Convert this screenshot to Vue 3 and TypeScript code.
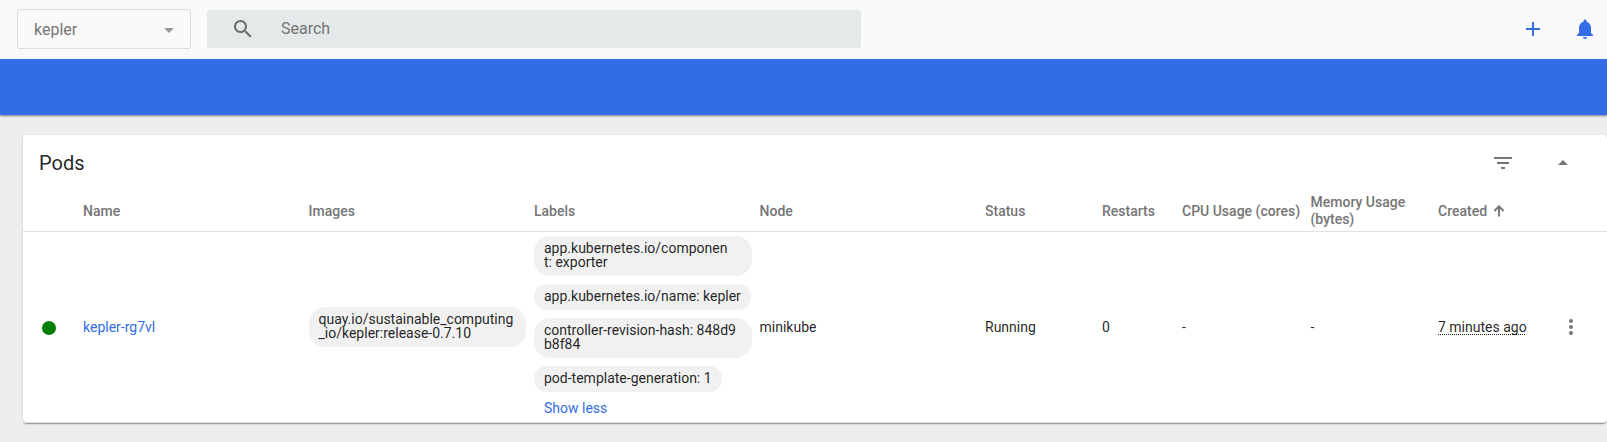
<script setup lang="ts">
interface Column {
  key: string
  title: string
  sorted?: boolean
}

const columns: Column[] = [
  { key: 'name', title: 'Name' },
  { key: 'images', title: 'Images' },
  { key: 'labels', title: 'Labels' },
  { key: 'node', title: 'Node' },
  { key: 'status', title: 'Status' },
  { key: 'restarts', title: 'Restarts' },
  { key: 'cpu', title: 'CPU Usage (cores)' },
  { key: 'memory', title: 'Memory Usage (bytes)' },
  { key: 'created', title: 'Created', sorted: true },
]

const pod = {
  name: 'kepler-rg7vl',
  images: ['quay.io/sustainable_computing_io/kepler:release-0.7.10'],
  labels: [
    'app.kubernetes.io/component:\u00a0exporter',
    'app.kubernetes.io/name:\u00a0kepler',
    'controller-revision-hash:\u00a0848d9b8f84',
    'pod-template-generation:\u00a01',
  ],
  node: 'minikube',
  status: 'Running',
  restarts: 0,
  cpu: '-',
  memory: '-',
  created: '7 minutes ago',
}
</script>

<template>
  <div class="page">
    <header class="topbar">
      <div class="namespace">
        <span>kepler</span>
        <i class="caret"></i>
      </div>
      <div class="search">
        <svg class="icon" viewBox="0 0 24 24">
          <path d="M15.5 14h-.79l-.28-.27C15.41 12.59 16 11.11 16 9.5 16 5.91 13.09 3 9.5 3S3 5.91 3 9.5 5.91 16 9.5 16c1.61 0 3.09-.59 4.23-1.57l.27.28v.79l5 4.99L20.49 19l-4.99-5zm-6 0C7.01 14 5 11.99 5 9.5S7.01 5 9.5 5 14 7.01 14 9.5 11.99 14 9.5 14z" />
        </svg>
        <span>Search</span>
      </div>
      <div class="actions">
        <svg class="icon" viewBox="0 0 24 24"><path d="M19 13h-6v6h-2v-6H5v-2h6V5h2v6h6v2z" /></svg>
        <svg class="icon" viewBox="0 0 24 24">
          <path d="M12 22c1.1 0 2-.9 2-2h-4c0 1.1.89 2 2 2zm6-6v-5c0-3.07-1.64-5.64-4.5-6.32V4c0-.83-.67-1.5-1.5-1.5s-1.5.67-1.5 1.5v.68C7.63 5.36 6 7.92 6 11v5l-2 2v1h16v-1l-2-2z" />
        </svg>
      </div>
    </header>
    <div class="banner"></div>
    <main class="content">
      <section class="card">
        <div class="card-head">
          <h1>Pods</h1>
          <div class="tools">
            <svg class="icon" viewBox="0 0 24 24"><path d="M10 18h4v-2h-4v2zM3 6v2h18V6H3zm3 7h12v-2H6v2z" /></svg>
            <svg class="icon" viewBox="0 0 24 24"><path d="M7 14l5-5 5 5z" /></svg>
          </div>
        </div>
        <div class="row head">
          <div></div>
          <div v-for="c in columns" :key="c.key" class="cell">
            <span>{{ c.title }}</span>
            <svg v-if="c.sorted" class="sort" viewBox="0 0 12 12">
              <path d="M6 11.5V1.5M1.4 6L6 1.4L10.6 6" />
            </svg>
          </div>
          <div></div>
        </div>
        <div class="row body">
          <div class="state"><i class="dot"></i></div>
          <div class="cell"><a>{{ pod.name }}</a></div>
          <div class="chips">
            <span v-for="i in pod.images" :key="i" class="chip">{{ i }}</span>
          </div>
          <div class="chips">
            <span v-for="l in pod.labels" :key="l" class="chip">{{ l }}</span>
            <a class="less">Show less</a>
          </div>
          <div class="cell">{{ pod.node }}</div>
          <div class="cell">{{ pod.status }}</div>
          <div class="cell">{{ pod.restarts }}</div>
          <div class="cell">{{ pod.cpu }}</div>
          <div class="cell">{{ pod.memory }}</div>
          <div class="cell"><span class="ago">{{ pod.created }}</span></div>
          <div class="menu">
            <svg class="icon" viewBox="0 0 24 24">
              <path d="M12 8c1.1 0 2-.9 2-2s-.9-2-2-2-2 .9-2 2 .9 2 2 2zm0 2c-1.1 0-2 .9-2 2s.9 2 2 2 2-.9 2-2-.9-2-2-2zm0 6c-1.1 0-2 .9-2 2s.9 2 2 2 2-.9 2-2-.9-2-2-2z" />
            </svg>
          </div>
        </div>
      </section>
    </main>
  </div>
</template>

<style>
body {
  margin: 0;
  background: #edeef0;
}
</style>

<style scoped>
.page {
  box-sizing: border-box;
  height: 442px;
  overflow: hidden;
  font-family: Roboto, "Liberation Sans", sans-serif;
  font-size: 14px;
  color: rgba(0, 0, 0, 0.87);
  background: #edeef0;
}
.icon {
  display: block;
  width: 24px;
  height: 24px;
  fill: currentColor;
}
.topbar {
  display: flex;
  align-items: flex-start;
  box-sizing: border-box;
  height: 59px;
  padding: 9px 10px 0 17px;
  background: #fafafa;
  font-size: 16px;
  color: #757575;
}
.namespace {
  display: flex;
  align-items: center;
  justify-content: space-between;
  box-sizing: border-box;
  width: 174px;
  height: 40px;
  padding: 0 16px;
  border: 1px solid #dcdcdc;
  border-radius: 2px;
}
.caret {
  margin-top: 2px;
  border: 5px solid transparent;
  border-top-color: #999;
  border-bottom: 0;
}
.search {
  display: flex;
  align-items: center;
  box-sizing: border-box;
  width: 654px;
  height: 38px;
  margin: 1px 0 0 16px;
  padding: 0 0 1px 24px;
  border-radius: 2px;
  background: #e4e9e9;
}
.search .icon {
  margin-right: 26px;
  color: #6b6e6e;
}
.actions {
  display: flex;
  gap: 28px;
  margin: 8px 0 0 auto;
  color: #326de6;
}
.banner {
  position: relative;
  height: 56px;
  background: #326de6;
  box-shadow: 0 1px 2px rgba(0, 0, 0, 0.5);
}
.content {
  padding: 20px 0 0 23px;
}
.card {
  height: 288px;
  border-radius: 4px;
  background: #fff;
  box-shadow: 0 2px 1px -1px rgba(0, 0, 0, 0.2), 0 1px 1px rgba(0, 0, 0, 0.14), 0 1px 3px rgba(0, 0, 0, 0.12);
}
.card-head {
  display: flex;
  align-items: center;
  justify-content: space-between;
  height: 56px;
  padding: 0 32px 0 16px;
}
h1 {
  margin: 0;
  font-size: 20px;
  font-weight: 400;
}
.tools {
  display: flex;
  gap: 36px;
  color: #757575;
}
.row {
  display: grid;
  grid-template-columns: 60px 225.5px 225.5px 225.5px 225.5px 117px 80px 128.5px 127.5px 121px 1fr;
  align-items: center;
}
.head {
  height: 40px;
  border-bottom: 1px solid #e0e0e0;
  font-weight: 500;
  line-height: 17px;
  color: #757575;
}
.head .cell {
  display: flex;
  align-items: center;
}
.head .cell:nth-child(9) {
  padding-right: 20px;
}
.sort {
  width: 12px;
  height: 12px;
  margin-left: 6px;
  fill: none;
  stroke: currentColor;
  stroke-width: 1.9;
}
.body {
  height: 190px;
  border-bottom: 1px solid #e0e0e0;
  border-radius: 0 0 4px 4px;
}
.state {
  padding: 2px 0 0 19px;
}
.dot {
  display: block;
  width: 14px;
  height: 14px;
  border-radius: 50%;
  background: #008000;
}
a {
  color: #326de6;
}
.chips {
  display: flex;
  flex-direction: column;
  align-items: flex-start;
  gap: 8px;
}
.chip {
  box-sizing: border-box;
  max-width: 217.5px;
  padding: 5px 10px 7px;
  border-radius: 16px;
  background: #f1f1f1;
  line-height: 14px;
  word-break: break-all;
}
.less {
  margin: -1px 0 1px;
  padding-left: 10px;
  line-height: 18px;
}
.ago {
  text-decoration: underline dotted 1px;
  text-underline-offset: 2px;
  text-decoration-skip-ink: none;
}
.menu {
  color: #757575;
}
</style>
